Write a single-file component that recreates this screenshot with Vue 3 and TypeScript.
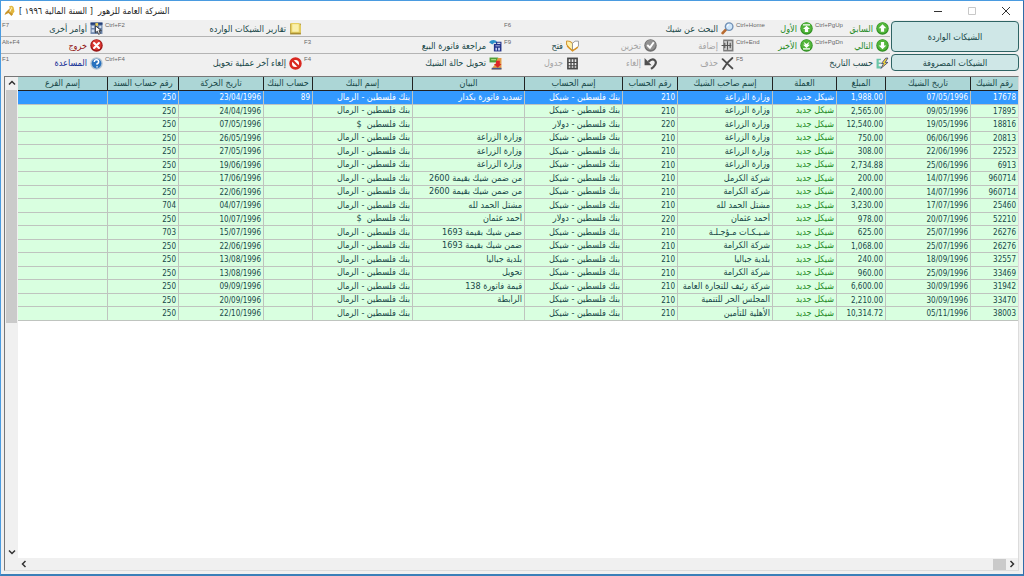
<script setup lang="ts">
import { ref } from 'vue'

interface Command {
  label: string
  icon: string
  row: number
  from: number
  span: number
  key?: string
  tone?: string
  disabled?: boolean
}

interface Cheque {
  cells: string[]
}

const icons: Record<string, string> = {
  up: '<circle cx="12" cy="12" r="11.500" fill="#2f8f22"/><circle cx="12" cy="11" r="10" fill="#52b53a"/><path d="M12 4 19 11.500H15V18H9V11.500H5Z" fill="#fff"/>',
  down: '<circle cx="12" cy="12" r="11.500" fill="#2f8f22"/><circle cx="12" cy="11" r="10" fill="#52b53a"/><path d="M12 19 19 12H15V5.500H9V12H5Z" fill="#fff"/>',
  first: '<circle cx="12" cy="12" r="11.500" fill="#2f8f22"/><circle cx="12" cy="11" r="10" fill="#52b53a"/><path d="M5.500 4H18.500V6.500H5.500ZM12 7 18.500 13H15V18.500H9V13H5.500Z" fill="#fff"/>',
  last: '<circle cx="12" cy="12" r="11.500" fill="#2f8f22"/><circle cx="12" cy="11" r="10" fill="#52b53a"/><path d="M5.500 17H18.500V19.500H5.500ZM12 16.500 18.500 10.500H15L17.500 5 12 9 6.500 5 9 10.500H5.500Z" fill="#fff"/>',
  sort: '<path d="M1 3H9V6H5V10H9V13H5V17H9V21H1Z" fill="#6cc6a8"/><path d="M18 2 10 12H14L9 21 22 10H17L22 2Z" fill="#f4d83a" stroke="#39417a" stroke-width="1.500"/>',
  search: '<path d="M9 14 3 20.500" stroke="#b86b30" stroke-width="5" stroke-linecap="round"/><circle cx="15" cy="8.500" r="7" fill="#cfe6fa" stroke="#7190b5" stroke-width="2.500"/><path d="M11.500 8Q12 5 15 4.500" stroke="#fff" stroke-width="2" fill="none"/>',
  add: '<path d="M4 1H23V23H4Z" fill="#7b7b7b"/><path d="M6 4H20V20H6Z" fill="#d8d8d8"/><path d="M12 4V20M1 12H19M7 7V17M17 7V17" stroke="#555" stroke-width="2.200" fill="none"/>',
  remove: '<path d="M3 4 21 21M21 2Q11 10 4 22" stroke="#4b4b4b" stroke-width="3.500" stroke-linecap="round" fill="none"/>',
  save: '<circle cx="12" cy="12" r="11.500" fill="#6f6f6f"/><circle cx="12" cy="11" r="9.500" fill="#929292"/><path d="M6 11 11 16 18 6" stroke="#fff" stroke-width="3.500" fill="none"/>',
  undo: '<path d="M8 9Q15 2 20 6C25 11 19 18 13 22" stroke="#505050" stroke-width="4" fill="none"/><path d="M1 2V15H14Z" fill="#505050"/>',
  open: '<path d="M1 4Q7 3 12 8V21L6 17 1 10Z" fill="#fff1ad" stroke="#d39a3a" stroke-width="2"/><path d="M12 8Q16 2 23 4V13L19 18 12 21Z" fill="#fff" stroke="#8a8a8a" stroke-width="1.500"/><path d="M2 13 12 22 22 15" stroke="#db9524" stroke-width="2.500" fill="none"/>',
  grid: '<path d="M2 1H22V23H2Z" fill="#4a4a4a"/><path d="M5 4H8V9H5ZM10.500 4H13.500V9H10.500ZM16 4H19V9H16ZM5 11H8V15H5ZM10.500 11H13.500V15H10.500ZM16 11H19V15H16ZM5 17H8V20H5ZM10.500 17H13.500V20H10.500ZM16 17H19V20H16Z" fill="#e7e7e7"/>',
  review: '<path d="M0 6Q5 0 13 3L16 8 10 7 6 10Z" fill="#2d91c9"/><path d="M9 9H23V23H9Z" fill="#24348b"/><path d="M12 12H20V13.500H12ZM12 16H14.500V21H12ZM17 16H20V21H17Z" fill="#dce4ff"/><path d="M14 9V6H22V9" stroke="#24348b" stroke-width="2" fill="none"/>',
  convert: '<path d="M1 1H17V10H1Z" fill="#4f9d35"/><path d="M4 4H13V6H4Z" fill="#b8e68b"/><path d="M16 2H23V23H4L12 12Z" fill="#e39b49"/><path d="M13 7H20V13H23L16 20 9 13H13Z" fill="#db2528"/><path d="M5 20H23V23H5Z" fill="#45598e"/>',
  report: '<path d="M2 3H22V23H2Z" fill="#a98f35"/><path d="M3 2H18L22 6V20H3Z" fill="#e6cf62"/><path d="M6 4H18V18H6Z" fill="#faf0ac"/>',
  cancel: '<circle cx="12" cy="12" r="9" fill="#fff" stroke="#d92820" stroke-width="5"/><path d="M6 6 18 18" stroke="#d92820" stroke-width="4"/>',
  more: '<path d="M1 1H23V22H1Z" fill="#6a84aa"/><path d="M1 1H23V5H1Z" fill="#243e78"/><path d="M3 7H8V11H3ZM3 14H8V19H3ZM17 7H21V11H17Z" fill="#cfdcf0"/><path d="M10 2H15V7H10Z" fill="#f2d456"/><path d="M10 7V20L13.500 17 16 23 19 21 16.500 16H21Z" fill="#fff" stroke="#222" stroke-width="1.500"/>',
  exit: '<circle cx="12" cy="12" r="11.500" fill="#9c1717"/><circle cx="12" cy="11" r="9.500" fill="#da3832"/><path d="M7.500 7.500 16.500 16.500M16.500 7.500 7.500 16.500" stroke="#fff" stroke-width="4" stroke-linecap="round"/>',
  help: '<circle cx="12" cy="12" r="11.500" fill="#b4c4d2"/><circle cx="12" cy="12" r="9" fill="#2872bf"/><path d="M8 9Q8 5 12 5T16 9Q16 11 13 12.500V14.500M13 17V19.500" stroke="#fff" stroke-width="2.800" fill="none"/>',
}

const commands: Command[] = [
  { label: 'السابق', icon: 'up', row: 1, from: 2, span: 1, key: 'Ctrl+PgUp', tone: 'green' },
  { label: 'الأول', icon: 'first', row: 1, from: 3, span: 1, key: 'Ctrl+Home', tone: 'green' },
  { label: 'البحث عن شيك', icon: 'search', row: 1, from: 4, span: 3, key: 'F6' },
  { label: 'تقارير الشيكات الوارده', icon: 'report', row: 1, from: 8, span: 1, key: 'Ctrl+F2' },
  { label: 'أوامر أخرى', icon: 'more', row: 1, from: 9, span: 1, key: 'F7' },
  { label: 'التالي', icon: 'down', row: 2, from: 2, span: 1, key: 'Ctrl+PgDn', tone: 'green' },
  { label: 'الأخير', icon: 'last', row: 2, from: 3, span: 1, key: 'Ctrl+End', tone: 'green' },
  { label: 'إضافة', icon: 'add', row: 2, from: 4, span: 1, disabled: true },
  { label: 'تخزين', icon: 'save', row: 2, from: 5, span: 1, disabled: true },
  { label: 'فتح', icon: 'open', row: 2, from: 6, span: 1, key: 'F9' },
  { label: 'مراجعة فاتورة البيع', icon: 'review', row: 2, from: 7, span: 1, key: 'F3' },
  { label: 'خروج', icon: 'exit', row: 2, from: 9, span: 1, key: 'Alt+F4', tone: 'red' },
  { label: 'حسب التاريخ', icon: 'sort', row: 3, from: 2, span: 2, key: 'F5' },
  { label: 'حذف', icon: 'remove', row: 3, from: 4, span: 1, disabled: true },
  { label: 'إلغاء', icon: 'undo', row: 3, from: 5, span: 1, disabled: true },
  { label: 'جدول', icon: 'grid', row: 3, from: 6, span: 1, disabled: true },
  { label: 'تحويل حالة الشيك', icon: 'convert', row: 3, from: 7, span: 1, key: 'F4' },
  { label: 'إلغاء آخر عملية تحويل', icon: 'cancel', row: 3, from: 8, span: 1, key: 'Ctrl+F4' },
  { label: 'المساعدة', icon: 'help', row: 3, from: 9, span: 1, key: 'F1', tone: 'blue' },
]

const headers = ['رقم الشيك', 'تاريخ الشيك', 'المبلغ', 'العملة', 'إسم صاحب الشيك', 'رقم الحساب', 'إسم الحساب', 'البيان', 'إسم البنك', 'حساب البنك', 'تاريخ الحركة', 'رقم حساب السند', 'إسم الفرع']
const widths = [48, 85, 49, 64, 95, 55, 98, 112, 100, 49, 85, 71, 89]
const numeric = [0, 1, 2, 5, 9, 10, 11]

const ministry = 'وزارة الزراعة'
const karama = 'شركة الكرامة'
function cheque(no: string, due: string, amount: string, owner: string, note: string, moved: string, voucher = '250', dollar = false, bankAccount = ''): Cheque {
  return {
    cells: [no, due, amount, 'شيكل جديد', owner, dollar ? '220' : '210',
      dollar ? 'بنك فلسطين - دولار' : 'بنك فلسطين - شيكل', note,
      dollar ? 'بنك فلسطين  $' : 'بنك فلسطين - الرمال', bankAccount, moved, voucher, ''],
  }
}

const cheques: Cheque[] = [
  cheque('17678', '07/05/1996', '1,988.00', ministry, 'تسديد فاتورة بكدار', '23/04/1996', '250', false, '89'),
  cheque('17895', '09/05/1996', '2,565.00', ministry, '', '24/04/1996'),
  cheque('18816', '19/05/1996', '12,540.00', ministry, '', '07/05/1996', '250', true),
  cheque('20813', '06/06/1996', '750.00', ministry, ministry, '26/05/1996'),
  cheque('22523', '22/06/1996', '308.00', ministry, ministry, '27/05/1996'),
  cheque('6913', '25/06/1996', '2,734.88', ministry, ministry, '19/06/1996'),
  cheque('960714', '14/07/1996', '200.00', 'شركة الكرمل', 'من ضمن شيك بقيمة 2600', '17/06/1996'),
  cheque('960714', '14/07/1996', '2,400.00', karama, 'من ضمن شيك بقيمة 2600', '22/06/1996'),
  cheque('25460', '17/07/1996', '3,230.00', 'مشتل الحمد لله', 'مشتل الحمد لله', '04/07/1996', '704'),
  cheque('52210', '20/07/1996', '978.00', 'أحمد عثمان', 'أحمد عثمان', '10/07/1996', '250', true),
  cheque('26276', '25/07/1996', '625.00', 'شـيـكـات مـؤجـلـة', 'ضمن شيك بقيمة 1693', '15/07/1996', '703'),
  cheque('26276', '25/07/1996', '1,068.00', karama, 'ضمن شيك بقيمة 1693', '22/06/1996'),
  cheque('32557', '18/09/1996', '240.00', 'بلدية جباليا', 'بلدية جباليا', '13/08/1996'),
  cheque('33469', '25/09/1996', '960.00', karama, 'تحويل', '13/08/1996'),
  cheque('31942', '30/09/1996', '6,600.00', 'شركة رئيف للتجارة العامة', 'قيمة فاتورة 138', '09/09/1996'),
  cheque('33470', '30/09/1996', '2,210.00', 'المجلس الحر للتنمية', 'الرابطة', '20/09/1996'),
  cheque('38003', '05/11/1996', '10,314.72', 'الأهلية للتأمين', '', '22/10/1996'),
]

const selected = ref(0)
</script>

<template>
  <div class="window" dir="rtl" lang="ar">
    <header class="titlebar">
      <div class="controls">
        <button type="button" aria-label="إغلاق"><svg viewBox="0 0 10 10"><path d="M1 1 9 9M9 1 1 9" /></svg></button>
        <button type="button" aria-label="تكبير" disabled><svg viewBox="0 0 10 10"><path d="M1.500 1.500H8.500V8.500H1.500Z" /></svg></button>
        <button type="button" aria-label="تصغير"><svg viewBox="0 0 10 10"><path d="M1 5.500H9" /></svg></button>
      </div>
      <div class="caption">
        <h1>الشركة العامة للزهور&nbsp; [ السنة المالية ١٩٩٦ ]</h1>
        <svg class="logo" viewBox="0 0 24 24"><path d="M10 3Q15 0 19 4L21 13 16 20 11 16 14 10Z" fill="#e2b63e" /><path d="M12 6 3 15 1 20 9 16 15 22 18 18 11 14Z" fill="#c9952a" /><path d="M13 3 17 6 15 10Z" fill="#fff0a0" /></svg>
      </div>
    </header>

    <nav class="toolbar">
      <div class="tabs">
        <button type="button" class="tab tab-main">الشيكات الواردة</button>
        <button type="button" class="tab">الشيكات المصروفة</button>
      </div>
      <div v-for="n in 3" :key="n" class="strip" :class="'row-' + n"></div>
      <button
        v-for="c in commands"
        :key="c.label"
        type="button"
        class="command"
        :class="c.tone"
        :disabled="c.disabled"
        :style="{ gridRow: c.row, gridColumn: c.from + ' / span ' + c.span }"
      >
        <svg viewBox="0 0 24 24" aria-hidden="true" v-html="icons[c.icon]"></svg>
        <span>{{ c.label }}</span>
        <kbd v-if="c.key" dir="ltr">{{ c.key }}</kbd>
      </button>
    </nav>

    <main class="sheet">
      <div class="view">
        <table>
          <colgroup><col v-for="(w, i) in widths" :key="i" :style="{ width: w / 10 + '%' }" /></colgroup>
          <thead>
            <tr><th v-for="h in headers" :key="h" scope="col">{{ h }}</th></tr>
          </thead>
          <tbody>
            <tr v-for="(row, r) in cheques" :key="r" :class="{ selected: r === selected }" @click="selected = r">
              <td v-for="(cell, i) in row.cells" :key="i" :class="{ num: numeric.includes(i), money: i === 3 }">{{ cell }}</td>
            </tr>
          </tbody>
        </table>
      </div>
      <div class="vscroll">
        <button type="button" aria-label="أعلى"><svg viewBox="0 0 10 10"><path d="M2 6.500 5 3.500 8 6.500" /></svg></button>
        <div class="vtrack"><div class="vthumb"></div></div>
        <button type="button" aria-label="أسفل"><svg viewBox="0 0 10 10"><path d="M2 3.500 5 6.500 8 3.500" /></svg></button>
      </div>
      <div class="hscroll">
        <button type="button" aria-label="يمين"><svg viewBox="0 0 10 10"><path d="M3.500 2 6.500 5 3.500 8" /></svg></button>
        <div class="hthumb"></div>
        <button type="button" class="to-left" aria-label="يسار"><svg viewBox="0 0 10 10"><path d="M6.500 2 3.500 5 6.500 8" /></svg></button>
      </div>
      <div class="corner"></div>
    </main>
  </div>
</template>

<style>
body {
  margin: 0;
}
</style>

<style scoped>
.window {
  box-sizing: border-box;
  height: 100vh;
  display: flex;
  flex-direction: column;
  background: #f0f0f0;
  border: 1px solid #4a9be0;
  border-right-color: #2f6da8;
  border-bottom: 2px solid #3a7fb8;
  font-family: "DejaVu Sans Condensed", "DejaVu Sans", sans-serif;
  font-size: 9px;
  color: #184848;
}

button {
  font: inherit;
  color: inherit;
  border: 0;
  margin: 0;
  padding: 0;
  background: none;
}

svg {
  display: block;
  flex: none;
}

.titlebar {
  flex: none;
  height: 19px;
  display: flex;
  justify-content: space-between;
  align-items: center;
  background: #fff;
}

.controls {
  display: flex;
}

.controls button {
  width: 34px;
  height: 19px;
  display: grid;
  place-items: center;
}

.controls svg {
  width: 10px;
  height: 10px;
}

.controls path,
.vscroll path,
.hscroll path {
  fill: none;
  stroke: #333;
}

.controls button:disabled path {
  stroke: #c8c8c8;
}

.caption {
  display: flex;
  align-items: center;
  gap: 3px;
  padding-left: 3px;
}

.caption h1 {
  margin: 0;
  font-size: 9px;
  font-weight: 400;
  color: #222;
}

.logo {
  width: 12px;
  height: 12px;
}

.toolbar {
  flex: none;
  display: grid;
  grid-template-columns: 133fr 76fr 79fr 77fr 78fr 77fr 200fr 199fr 103fr;
  grid-template-rows: 17px 17px 18px;
}

.tabs {
  grid-column: 1;
  grid-row: 1 / span 3;
  display: flex;
  flex-direction: column;
  gap: 2px;
  padding: 1px 4px 0 1px;
}

.tab {
  height: 17px;
  background: #cfe7e7;
  border: 1px solid #2f6464;
  border-radius: 4px;
}

.tab-main {
  height: 31px;
}

.strip {
  grid-column: 2 / -1;
  border-bottom: 1px solid #b4b4b4;
}

.row-1 {
  grid-row: 1;
}

.row-2 {
  grid-row: 2;
}

.row-3 {
  grid-row: 3;
  border-bottom: 0;
}

.command {
  display: flex;
  align-items: center;
  gap: 3px;
  padding: 0 1px;
  min-width: 0;
  white-space: nowrap;
}

.command svg {
  width: 13px;
  height: 13px;
}

.command kbd {
  align-self: flex-start;
  margin-right: auto;
  padding-top: 2px;
  font-family: "Liberation Sans", Arial, sans-serif;
  font-size: 6px;
  line-height: 6px;
  color: #666;
}

.command:disabled {
  color: #a3a3a3;
}

.green {
  color: #1f8a1f;
}

.red {
  color: #901010;
}

.blue {
  color: #102c94;
}

.sheet {
  flex: 1;
  min-height: 0;
  margin: 4px 4px 3px 3px;
  display: grid;
  grid-template-columns: 1fr 13px;
  grid-template-rows: 1fr 12px;
  border: 1px solid #dcdcdc;
  border-top-color: #777;
  border-left-color: #777;
}

.view {
  background: #fff;
  overflow: hidden;
}

table {
  width: 100%;
  table-layout: fixed;
  border-collapse: separate;
  border-spacing: 0;
}

th,
td {
  box-sizing: border-box;
  padding: 0 2px 1px;
  line-height: 11px;
  white-space: pre;
  overflow: hidden;
}

th {
  height: 14px;
  padding: 0;
  background: #acd6d6;
  border-bottom: 1px solid #222;
  border-left: 1px solid #222;
  font-weight: 400;
  text-align: center;
}

td {
  background: #d9ffe0;
  border-bottom: 1px solid #bfc4bf;
  border-left: 1px solid #bfc4bf;
  text-align: right;
}

th:last-child,
td:last-child {
  border-left: 0;
}

tbody tr:nth-child(odd) td {
  height: 14px;
}

tbody tr:nth-child(even) td {
  height: 13px;
}

.num {
  padding-bottom: 0;
  font-size: 8px;
}

.money {
  color: #1f8a1f;
}

.selected td {
  background: #3399ff;
  color: #fff;
}

.vscroll {
  display: flex;
  flex-direction: column;
  background: #f0f0f0;
}

.vscroll button,
.hscroll button {
  width: 12px;
  height: 12px;
  display: grid;
  place-items: center;
}

.vscroll svg,
.hscroll svg {
  width: 10px;
  height: 10px;
}

.vscroll path,
.hscroll path {
  stroke-width: 1.5;
}

.vtrack {
  flex: 1;
}

.vthumb {
  width: 11px;
  height: 51%;
  margin: 1px 1px 0;
  background: #cacaca;
}

.hscroll {
  display: flex;
  align-items: center;
  background: #f0f0f0;
}

.hthumb {
  width: 13px;
  height: 11px;
  background: #cacaca;
}

.to-left {
  margin-right: auto;
}

.corner {
  background: #f0f0f0;
}
</style>
